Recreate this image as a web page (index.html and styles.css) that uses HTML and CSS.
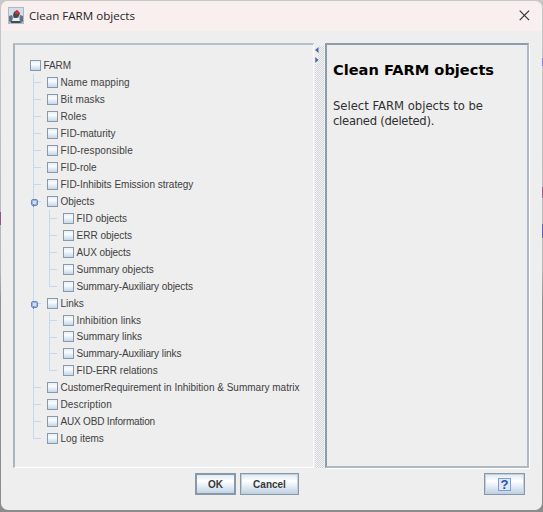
FILE: index.html
```html
<!DOCTYPE html>
<html lang="en">
<head>
<meta charset="utf-8">
<title>Clean FARM objects</title>
<link rel="stylesheet" href="styles.css">
</head>
<body>
<main class="dialog">
  <header class="titlebar">
    <svg class="app-icon" width="16" height="17" viewBox="0 0 16 17">
      <rect width="16" height="17" fill="#a9bac9"/>
      <path d="M1 1h14v8H1z" fill="#d3dee9"/>
      <path d="M1 14V9l3-1 1 4 3-1 4 1V8l3 1v5l-2 2H4z" fill="#65727f"/>
      <path d="M5 8l1-3 3-2 3 3-1 3-2 2H6z" fill="#444a53"/>
      <path d="M5 11h6l1 3H4z" fill="#edf0f2"/>
      <circle cx="9" cy="5.5" r="1.9" fill="#df3028"/>
      <path d="M3 15h9" stroke="#39414a" stroke-width="1.3"/>
    </svg>
    <h1 class="title">Clean FARM objects</h1>
    <svg class="close" width="11" height="11" viewBox="0 0 11 11"><path d="M.7.7l9.4 9.4M10.1.7L.7 10.1" stroke="#303030" stroke-width="1.15"/></svg>
  </header>
  <section class="content">
    <div class="tree-panel">
      <div class="row tight"><i class="check"></i><span>FARM</span></div>
      <ul class="tree">
        <li><div class="row wide"><i class="check"></i><span>Name mapping</span></div></li>
        <li><div class="row wide"><i class="check"></i><span>Bit masks</span></div></li>
        <li><div class="row wide"><i class="check"></i><span>Roles</span></div></li>
        <li><div class="row"><i class="check"></i><span>FID-maturity</span></div></li>
        <li><div class="row wide"><i class="check"></i><span>FID-responsible</span></div></li>
        <li><div class="row"><i class="check"></i><span>FID-role</span></div></li>
        <li><div class="row"><i class="check"></i><span>FID-Inhibits Emission strategy</span></div></li>
        <li class="open"><div class="row"><i class="check"></i><span>Objects</span></div>
          <ul class="subtree">
            <li><div class="row"><i class="check"></i><span>FID objects</span></div></li>
            <li><div class="row"><i class="check"></i><span>ERR objects</span></div></li>
            <li><div class="row tight"><i class="check"></i><span>AUX objects</span></div></li>
            <li><div class="row"><i class="check"></i><span>Summary objects</span></div></li>
            <li><div class="row tight"><i class="check"></i><span>Summary-Auxiliary objects</span></div></li>
          </ul>
        </li>
        <li class="open"><div class="row"><i class="check"></i><span>Links</span></div>
          <ul class="subtree">
            <li><div class="row wide"><i class="check"></i><span>Inhibition links</span></div></li>
            <li><div class="row"><i class="check"></i><span>Summary links</span></div></li>
            <li><div class="row tight"><i class="check"></i><span>Summary-Auxiliary links</span></div></li>
            <li><div class="row"><i class="check"></i><span>FID-ERR relations</span></div></li>
          </ul>
        </li>
        <li><div class="row"><i class="check"></i><span>CustomerRequirement in Inhibition &amp; Summary matrix</span></div></li>
        <li><div class="row wide"><i class="check"></i><span>Description</span></div></li>
        <li><div class="row tighter"><i class="check"></i><span>AUX OBD Information</span></div></li>
        <li><div class="row"><i class="check"></i><span>Log items</span></div></li>
      </ul>
    </div>
    <div class="divider">
      <svg width="11" height="18" viewBox="0 0 11 18"><path d="M0 0h3v18H0z" fill="#eee"/><path d="M3.5 1v6L0 4z M.3 11v6l3.2-3z" fill="#4868a8"/></svg>
    </div>
    <aside class="help-panel">
      <h2>Clean FARM objects</h2>
      <p>Select FARM objects to be<br><span class="last-line">cleaned (deleted).</span></p>
    </aside>
  </section>
  <footer class="actions">
    <button class="button ok">OK</button>
    <button class="button cancel">Cancel</button>
    <button class="button help" aria-label="Help"><span class="question">?</span></button>
  </footer>
</main>
</body>
</html>
```
FILE: styles.css
```css
* { box-sizing: border-box; }
body {
  margin: 0;
  height: 512px;
  overflow: hidden;
  padding: 1px;
  background:
    linear-gradient(#8d5789, #8d5789) 0 212px / 1px 13px no-repeat,
    linear-gradient(#6660b4, #6660b4) 542px 224px / 1px 14px no-repeat,
    linear-gradient(#9b6a8b, #9b6a8b) 542px 187px / 1px 11px no-repeat,
    linear-gradient(#8d7fd0, #8d7fd0) 542px 58px / 1px 8px no-repeat,
    linear-gradient(#c8c8c8 0, #b5b5b5 270px, #929292 300px, #8c8c8c);
  font-family: "Liberation Sans", Arial, sans-serif;
}
.dialog {
  display: flex;
  flex-direction: column;
  width: 541px;
  height: 509px;
  border-radius: 7px;
  overflow: hidden;
  background: #eee;
}
.titlebar {
  display: flex;
  align-items: center;
  height: 30px;
  padding: 0 12px 1px 7px;
  background: #f9efef;
}
.title {
  flex: 1;
  margin: 0 0 0 5px;
  font: 11.6px/18px "Open Sans", "Noto Sans", sans-serif;
  color: #252525;
}
.content {
  display: flex;
  height: 425px;
  margin: 12px 13px 0 12px;
}
.tree-panel {
  width: 301px;
  padding: 12px 0 0 15px;
  border: 1px solid #fff;
  border-top: 2px solid #b5c0c9;
  border-left: 2px solid #a9b5be;
}
ul { margin: 0; padding: 0; list-style: none; }
.row {
  display: flex;
  align-items: center;
  height: 16.97px;
  font-size: 10px;
  color: #404040;
  white-space: nowrap;
}
.wide { letter-spacing: 0.12px; }
.tight { letter-spacing: -0.08px; }
.tighter { letter-spacing: -0.18px; }
.check {
  flex: none;
  width: 11px;
  height: 11px;
  margin-right: 2.5px;
  border: 1px solid #8999a9;
  background: linear-gradient(#e5eff9, #fafcff 35%, #c4d7ea);
}
.tree { padding-left: 3px; }
.tree li {
  position: relative;
  padding-left: 14px;
  background:
    linear-gradient(#c6d9eb, #c6d9eb) 0 8px / 8px 1px no-repeat,
    linear-gradient(#c6d9eb, #c6d9eb) 0 0 / 1px 100% no-repeat;
}
.tree li:last-child {
  background-size: 8px 1px, 1px 8px;
}
.subtree { padding-left: 2px; }
.open::before {
  content: "";
  position: absolute;
  left: -2px;
  top: 6px;
  width: 5px;
  height: 5px;
  border: 1px solid #6485c2;
  border-radius: 2px;
  background: #cfdff5;
  box-shadow: inset 0 0 0 1px #9ab2dc;
}
.open::after {
  content: "";
  position: absolute;
  left: 0;
  top: 11px;
  width: 1px;
  height: 3px;
  background: #6485c2;
}
.divider {
  width: 11px;
  padding: 3px 0 0 1px;
  background:
    conic-gradient(#d1d5da 25%, #f5f5f5 0 50%, #d1d5da 0 75%, #f5f5f5 0) 2px 3px / 2px 2px;
  background-clip: content-box;
  border-right: 1px solid #eee;
}
.divider svg { display: block; }
.help-panel {
  width: 204px;
  padding: 16px 6px 0;
  border: 2px solid #8e9dab;
  border-right: 2px solid #aeb9c3;
  border-bottom: 2px solid #aeb9c3;
  box-shadow: 1px 1px 0 #fff;
  font-family: "DejaVu Sans", Verdana, sans-serif;
}
.help-panel h2 {
  margin: 0;
  font-size: 14.6px;
  line-height: 18px;
  color: #000;
  white-space: nowrap;
}
.help-panel p {
  margin: 20px 0 0;
  font-size: 11.6px;
  line-height: 14.5px;
  color: #303030;
  white-space: nowrap;
}
.last-line { letter-spacing: -0.27px; }
.actions {
  display: flex;
  gap: 4px;
  margin: 5px 17px 0 194px;
}
.button {
  display: flex;
  align-items: center;
  justify-content: center;
  height: 22px;
  padding: 0;
  border: 1px solid #8799a9;
  box-shadow: inset 0 0 0 1px #c2cfda;
  background: linear-gradient(#dce7f2, #fff 35%, #f2f6fa 48%, #bdd0e4);
  font: bold 10px "Liberation Sans", Arial, sans-serif;
  color: #383838;
}
.ok { width: 41px; box-shadow: inset 0 0 0 1px #8799a9; }
.cancel { width: 59px; }
.help { width: 41px; margin-left: auto; }
.question {
  width: 13px;
  height: 13px;
  border: 1px solid #7f9bd0;
  background: #e0eaf7;
  color: #2850b0;
  font: bold 13px/12px "Liberation Sans", Arial, sans-serif;
}
```
